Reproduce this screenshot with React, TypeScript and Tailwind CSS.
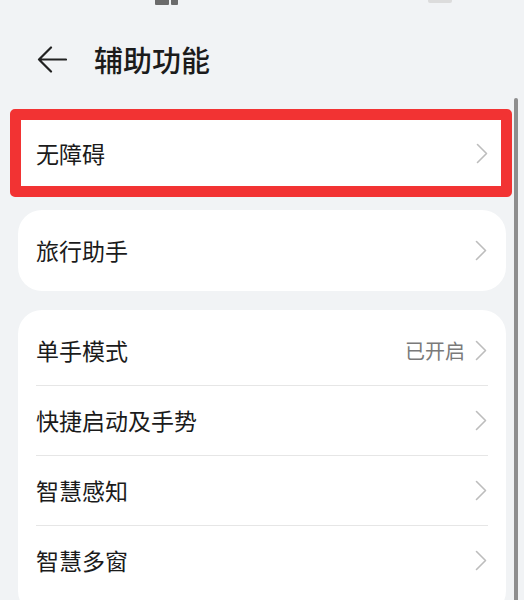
const font = { fontFamily: '"Noto Sans CJK SC", "Noto Sans", sans-serif' };

function Chevron() {
  return (
    <svg width="12" height="21" viewBox="0 0 12 21" className="shrink-0">
      <polyline points="1.5,1.5 10.5,10.5 1.5,19.5" fill="none" stroke="#bdbdbd" strokeWidth="1.6" strokeLinecap="round" strokeLinejoin="round" />
    </svg>
  );
}

function Row({ label, value, divider }: { label: string; value?: string; divider?: boolean }) {
  return (
    <div className="mx-[18px]">
      <div className="flex h-[69px] items-center justify-between pr-[1px]">
        <span className="text-[23px] leading-none text-[#1b1b1b]">{label}</span>
        <div className="flex items-center gap-[10px]">
          {value && <span className="text-[20px] leading-none text-[#7a7a7a]">{value}</span>}
          <Chevron />
        </div>
      </div>
      {divider && <div className="h-px bg-[#e6e6e6]" />}
    </div>
  );
}

export default function App() {
  return (
    <div className="relative h-[600px] w-[524px] overflow-hidden bg-[#f1f3f5]" style={font}>
      {/* status bar leftovers */}
      <div className="absolute left-[155px] top-0 flex gap-[2px]">
        <div className="h-[5px] w-[14px] rounded-b-[1px] bg-[#6b6b6b]" />
        <div className="h-[5px] w-[7px] rounded-b-[1px] bg-[#6b6b6b]" />
      </div>
      <div className="absolute left-[428px] top-0 h-[3px] w-[24px] rounded-b-[2px] bg-[#dcdcdc]" />

      <header className="flex h-[104px] items-center pl-[37px] pt-[14px]">
        <svg width="30" height="27" viewBox="0 0 30 27" className="shrink-0">
          <path d="M29 13.5H2M14 1.5L2 13.5L14 25.5" fill="none" stroke="#222" strokeWidth="2.2" strokeLinecap="round" strokeLinejoin="round" />
        </svg>
        <h1 className="ml-[27px] text-[29px] font-medium leading-none text-[#1b1b1b]">辅助功能</h1>
      </header>

      <div className="mt-[5px] flex flex-col">
        <div className="ml-[10px] w-[502px] rounded-[5px] border-[11px] border-[#f23333] bg-white">
          <div className="flex h-[66px] items-center justify-between pl-[15px] pr-[13px]">
            <span className="text-[23px] leading-none text-[#1b1b1b]">无障碍</span>
            <Chevron />
          </div>
        </div>

        <div className="ml-[18px] mt-[13px] w-[488px] rounded-[24px] bg-white">
          <div className="flex h-[81px] items-center justify-between pl-[18px] pr-[19px]">
            <span className="text-[23px] leading-none text-[#1b1b1b]">旅行助手</span>
            <Chevron />
          </div>
        </div>

        <div className="ml-[18px] mt-[19px] w-[488px] rounded-[24px] bg-white pt-[6px] pb-[20px]">
          <Row label="单手模式" value="已开启" divider />
          <Row label="快捷启动及手势" divider />
          <Row label="智慧感知" divider />
          <Row label="智慧多窗" />
        </div>
      </div>

      {/* scrollbar */}
      <div className="absolute bottom-0 left-[514px] top-[98px] w-[4px] rounded-t-full bg-[#8e8e8e]" />
    </div>
  );
}
